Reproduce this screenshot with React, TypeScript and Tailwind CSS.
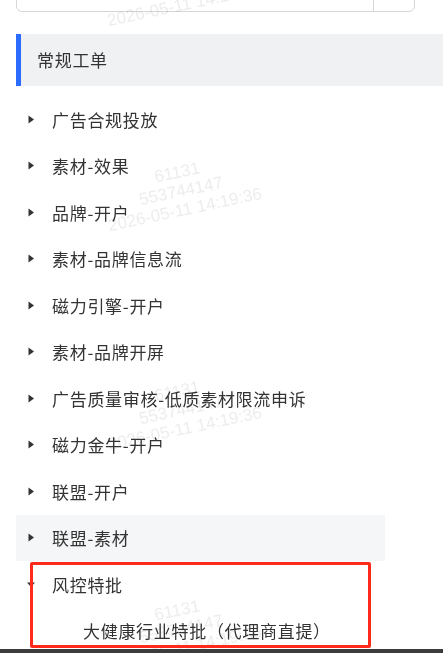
import React from "react";

const FONT = '"Noto Sans CJK SC", "Liberation Sans", sans-serif';

const items = [
  "广告合规投放",
  "素材-效果",
  "品牌-开户",
  "素材-品牌信息流",
  "磁力引擎-开户",
  "素材-品牌开屏",
  "广告质量审核-低质素材限流申诉",
  "磁力金牛-开户",
  "联盟-开户",
  "联盟-素材",
];

function Caret({ open }: { open?: boolean }) {
  return (
    <svg
      width="8"
      height="9"
      viewBox="0 0 8 9"
      className="shrink-0"
      aria-hidden="true"
    >
      {open ? (
        <path d="M0 2.5 L8 2.5 L4 7 Z" fill="#333" />
      ) : (
        <path d="M1.5 0.5 L7 4.5 L1.5 8.5 Z" fill="#333" />
      )}
    </svg>
  );
}

// 워터마크: 가운데 정렬된 세 줄, 살짝 회전 (multiply 로 글자 아래에 깔리는 느낌)
function Watermark({ x, y }: { x: number; y: number }) {
  return (
    <div
      className="pointer-events-none absolute flex -translate-x-1/2 -translate-y-1/2 -rotate-[12deg] flex-col items-center whitespace-nowrap text-[17px] leading-[19px] text-[#ededed] mix-blend-multiply"
      style={{ left: x, top: y, fontFamily: '"Liberation Sans", sans-serif' }}
    >
      <span>61131</span>
      <span>553744147</span>
      <span>2026-05-11 14:19:36</span>
    </div>
  );
}

export default function App() {
  return (
    <div
      className="relative isolate h-[653px] w-[443px] overflow-hidden bg-white"
      style={{ fontFamily: FONT }}
    >
      {/* 검색 입력창 (위쪽 잘림) */}
      <div className="mx-[16px] -mt-[28px] flex h-[40px] w-[399px] overflow-hidden rounded-[6px] border border-[#d4d6da] bg-white">
        <div className="flex flex-1 items-end pb-[12px] pl-[20px] text-[15px] leading-[15px] text-[#b4b6ba]">
          请输入
        </div>
        <div className="flex h-full w-[41px] items-end justify-center border-l border-[#d4d6da] pb-[11px]">
          <span className="block h-[3px] w-[1.5px] bg-[#555]" />
        </div>
      </div>

      {/* 그룹 헤더 */}
      <div className="mt-[22px] ml-[16px] flex h-[52px] items-center border-l-[5px] border-[#2b6bff] bg-[#f0f1f3] pl-[16px] text-[17px] tracking-[0.7px] text-[#333]">
        常规工单
      </div>

      {/* 트리 목록 */}
      <ul className="mt-[10px] ml-[16px] w-[369px]">
        {items.map((label, i) => (
          <li
            key={label}
            className={`flex h-[46.5px] items-center gap-[17px] pl-[11px] text-[17px] tracking-[0.7px] text-[#333] ${
              i === items.length - 1 ? "bg-[#f5f6f7]" : ""
            }`}
          >
            <Caret />
            <span>{label}</span>
          </li>
        ))}
        <li className="flex h-[46.5px] items-center gap-[17px] pl-[11px] text-[17px] tracking-[0.7px] text-[#333]">
          <Caret open />
          <span>风控特批</span>
        </li>
        <li className="flex h-[46.5px] items-center pl-[67px] text-[17px] tracking-[0.7px] text-[#333]">
          大健康行业特批（代理商直提）
        </li>
      </ul>

      {/* 워터마크 */}
      <Watermark x={180} y={-14} />
      <Watermark x={181} y={191} />
      <Watermark x={181} y={410} />
      <Watermark x={181} y={629} />
      <Watermark x={518} y={0} />
      <Watermark x={518} y={218} />
      <Watermark x={518} y={440} />

      {/* 빨간 주석 상자 */}
      <div className="pointer-events-none absolute left-[30px] top-[562px] h-[86px] w-[341px] rounded-[2px] border-[3px] border-[#ff2a1a]" />

      {/* 하단 어두운 바 */}
      <div className="absolute bottom-0 left-0 h-[4px] w-full bg-[#3c3c3c]" />
    </div>
  );
}
